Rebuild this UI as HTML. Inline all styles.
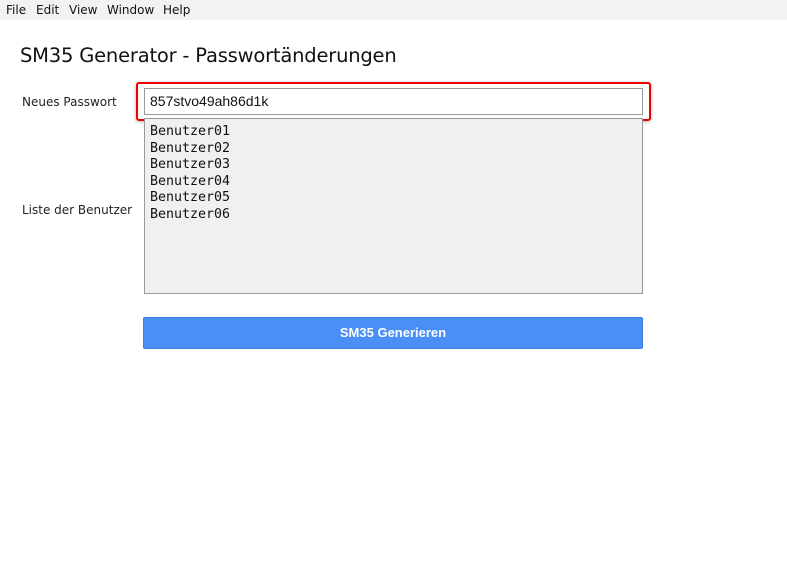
<!DOCTYPE html>
<html><head><style>
body{margin:0;width:787px;height:565px;background:#fff;font-family:"Liberation Sans",sans-serif;position:relative;overflow:hidden}
.menu{position:absolute;left:0;top:0;width:787px;height:20px;background:#f2f2f2;font-family:"DejaVu Sans","Liberation Sans",sans-serif;font-size:12px;color:#111}
.menu span{position:absolute;top:3px}
h1{position:absolute;left:20px;top:44px;margin:0;font-family:"DejaVu Sans","Liberation Sans",sans-serif;font-weight:normal;font-size:19.5px;color:#111;letter-spacing:-0.2px}
.lbl{position:absolute;left:22px;font-family:"DejaVu Sans","Liberation Sans",sans-serif;font-size:12px;color:#222}
.red{position:absolute;left:136px;top:82px;width:511px;height:35px;border:2px solid #e00;border-radius:3px;box-shadow:0 1px 3px rgba(0,0,0,.3)}
.inp{position:absolute;left:144px;top:88px;height:25px;border:1px solid #999;background:#fff;font-size:14px;line-height:25px;padding-left:5px;box-sizing:content-box;color:#111}
.ta{position:absolute;left:144px;top:118px;border:1px solid #999;background:#f0f0f0;font-family:"DejaVu Sans Mono","Liberation Mono",monospace;font-size:13.3px;line-height:16.6px;padding:5px 0 0 5px;box-sizing:border-box;width:499px;height:176px;color:#111}
.btn{position:absolute;left:143px;top:317px;width:500px;height:32px;background:#4a8ff5;border:1px solid #3b7ee0;box-sizing:border-box;border-radius:2px;color:#fff;font-weight:bold;font-size:13px;text-align:center;line-height:30px}
</style></head><body>
<div class="menu"><span style="left:6px">File</span><span style="left:36px">Edit</span><span style="left:69px">View</span><span style="left:107px">Window</span><span style="left:163px">Help</span></div>
<h1>SM35 Generator - Passwortänderungen</h1>
<div class="lbl" style="top:95px">Neues Passwort</div>
<div class="lbl" style="top:203px">Liste der Benutzer</div>
<div class="red"></div>
<div class="inp" style="width:492px">857stvo49ah86d1k</div>
<div class="ta">Benutzer01<br>Benutzer02<br>Benutzer03<br>Benutzer04<br>Benutzer05<br>Benutzer06</div>
<div class="btn">SM35 Generieren</div>
</body></html>
